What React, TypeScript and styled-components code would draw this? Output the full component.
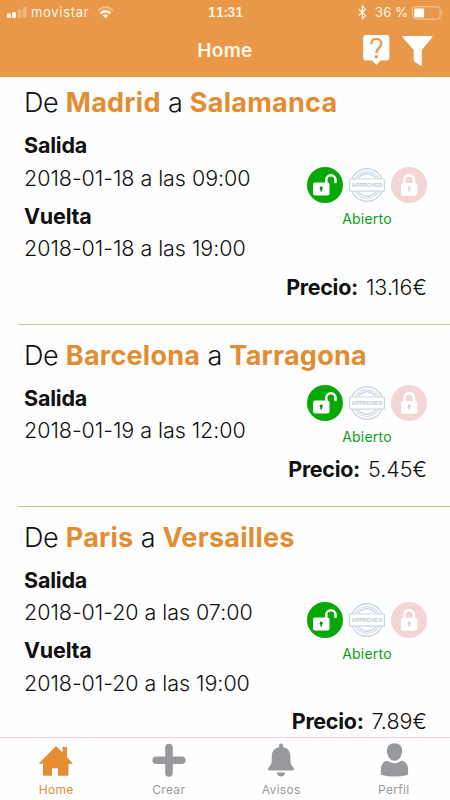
import React from "react";
import styled, { createGlobalStyle } from "styled-components";

const GlobalStyle = createGlobalStyle`
  * { box-sizing: border-box; }
  body { margin: 0; background: #fff; font-family: Inter, "Liberation Sans", sans-serif; }
`;

const Screen = styled.div`
  width: 450px;
  height: 800px;
  display: flex;
  flex-direction: column;
  overflow: hidden;
  background: #fefefe;
  color: #111;
`;

const TopBar = styled.header`
  flex: none;
  height: 77px;
  background: #e99849;
  color: #fff8e8;
`;

const StatusBar = styled.div`
  display: grid;
  grid-template-columns: 1fr auto 1fr;
  align-items: center;
  height: 25px;
  padding: 0 6px 0 7px;
  font-size: 13px;
  line-height: 25px;
`;

const StatusGroup = styled.div<{ $end?: boolean }>`
  display: flex;
  align-items: center;
  justify-content: ${(p) => (p.$end ? "flex-end" : "flex-start")};
`;

const Carrier = styled.span`
  margin: 0 8px 0 4px;
  letter-spacing: 0.7px;
`;

const Clock = styled.span`
  font-weight: 600;
  font-size: 13px;
  font-variant-numeric: tabular-nums;
  letter-spacing: -0.35px;
`;

const Battery = styled.span`
  margin: 0 4px 0 8px;
  letter-spacing: 0.1px;
`;

const NavBar = styled.div`
  display: grid;
  grid-template-columns: 1fr auto 1fr;
  align-items: center;
  height: 51px;
  padding: 0 17px;
`;

const NavTitle = styled.h1`
  grid-column: 2;
  margin: 0;
  font-size: 19px;
  font-weight: 600;
  letter-spacing: 0.3px;
`;

const NavActions = styled.div`
  display: flex;
  justify-content: flex-end;
  gap: 12px;
  margin-top: -2px;
`;

const TripList = styled.main`
  flex: 1;
  min-height: 0;
  overflow: hidden;
  padding-left: 18px;
`;

const Trip = styled.article<{ $first?: boolean }>`
  margin-top: ${(p) => (p.$first ? "-5px" : "0")};
  padding: 13px 23px 20.5px 6px;
  border-bottom: 1px solid #e3b98c;
`;

const Route = styled.h2`
  margin: 0 0 8px;
  height: 36px;
  line-height: 36px;
  font-size: 27px;
  font-weight: 300;
  letter-spacing: -0.3px;
  white-space: nowrap;
`;

const City = styled.strong`
  color: #e28d31;
  font-weight: 700;
  letter-spacing: 0.25px;
`;

const TripBody = styled.div`
  display: flex;
  align-items: center;
  justify-content: space-between;
`;

const Schedule = styled.dl`
  margin: 0;
  display: flex;
  flex-direction: column;
  gap: 5.5px;
`;

const Label = styled.dt`
  height: 32.5px;
  line-height: 32.5px;
  font-size: 21.5px;
  font-weight: 700;
  letter-spacing: -0.2px;
`;

const Moment = styled.dd`
  margin: 0;
  height: 32.5px;
  line-height: 32.5px;
  font-size: 21.5px;
  font-weight: 350;
  letter-spacing: -0.05px;
  white-space: nowrap;
`;

const Status = styled.div`
  display: flex;
  flex-direction: column;
  align-items: center;
  gap: 7px;
  padding-top: 2px;
`;

const StatusIcons = styled.div`
  display: flex;
  gap: 6px;
`;

const StatusText = styled.span`
  color: #0a9f14;
  font-size: 14px;
  line-height: 18px;
  letter-spacing: 0.2px;
`;

const Price = styled.div`
  margin-top: 6px;
  height: 32.5px;
  line-height: 32.5px;
  display: flex;
  justify-content: flex-end;
  gap: 8px;
  font-size: 21.5px;
  font-weight: 350;
  letter-spacing: 0;
`;

const PriceLabel = styled.b`
  font-weight: 700;
  letter-spacing: -0.3px;
`;

const TabBar = styled.nav`
  flex: none;
  height: 63px;
  display: grid;
  grid-template-columns: repeat(4, 1fr);
  border-top: 1px solid #eed3d3;
`;

const Tab = styled.a<{ $active?: boolean }>`
  display: flex;
  flex-direction: column;
  align-items: center;
  padding-top: 4px;
  color: ${(p) => (p.$active ? "#e58d33" : "#98999d")};
  font-size: 12px;
  line-height: 16px;
  letter-spacing: 0.3px;
  gap: 4px;
`;

const SignalIcon = () => (
  <svg width="20" height="13" viewBox="0 0 20 13" fill="currentColor">
    <rect x="0" y="7.5" width="4" height="4.5" rx="1" />
    <rect x="5" y="6" width="4" height="6" rx="1" />
    <rect x="10.5" y="3.5" width="4" height="8.5" rx="1" opacity=".3" />
    <rect x="15.5" y="1" width="4" height="11" rx="1" opacity=".3" />
  </svg>
);

const WifiIcon = () => (
  <svg width="17" height="13" viewBox="0 0 17 13" fill="none" stroke="currentColor" strokeWidth="2">
    <path d="M1 4.4Q8.500-1.800 16 4.400" opacity=".4" />
    <path d="M3.500 7.300Q8.500 3.100 13.500 7.300" strokeWidth="2.300" />
    <path d="M5.600 9.600Q8.500 7.100 11.400 9.600L8.500 12.300Z" fill="currentColor" stroke="none" />
  </svg>
);

const BluetoothIcon = () => (
  <svg width="9" height="15" viewBox="0 0 9 15" fill="none" stroke="currentColor" strokeWidth="1.2">
    <path d="M.8 4.2 7.6 10.4 4.4 13.5V1.2L7.6 4.3.8 10.5" />
  </svg>
);

const BatteryIcon = () => (
  <svg width="32" height="14" viewBox="0 0 32 14">
    <rect x=".6" y=".8" width="27.5" height="12.4" rx="2.5" fill="none" stroke="#f7c99b" />
    <rect x="2.3" y="2.5" width="9.8" height="9" rx="1" fill="#fff" />
    <path d="M29.5 4.8q2 2.2 0 4.4z" fill="#f7c99b" />
  </svg>
);

const HelpIcon = () => (
  <svg width="27" height="32" viewBox="0 0 27 32">
    <path fill="#fff" d="M3 1h20.500a2.800 2.800 0 0 1 2.800 2.800v20a2.800 2.800 0 0 1-2.800 2.800h-6L13.300 31 9.200 26.600H3A2.800 2.800 0 0 1 .2 23.800v-20A2.800 2.800 0 0 1 3 1z" />
    <path d="M8.300 10.200C8.300 6.700 10.400 4.900 13.300 4.900S18.300 6.700 18.300 9.500C18.300 13.500 13.400 13.800 13.400 19.200" fill="none" stroke="#e99849" strokeWidth="2.400" />
    <rect x="11.900" y="21.300" width="3" height="3" fill="#e99849" />
  </svg>
);

const FilterIcon = () => (
  <svg width="31" height="32" viewBox="0 0 31 32">
    <path fill="#fff" d="M1.200 2h28.500q1.200 0 .6 1.200L19.800 16v15q0 1.200-1.300.7l-6-4.300q-.8-.6-.8-1.700V16L.6 3.200Q0 2 1.200 2z" />
  </svg>
);

const OpenLockIcon = () => (
  <svg width="36" height="36" viewBox="0 0 36 36">
    <circle cx="18" cy="18" r="18" fill="#06a806" />
    <rect x="6" y="15.500" width="16.500" height="13" rx="2" fill="#fff" />
    <path d="M19.300 16v-3.200a4.600 4.600 0 0 1 9.200 0V15" fill="none" stroke="#fff" strokeWidth="2.600" strokeLinecap="round" />
    <path d="M14.200 19.600a1.500 1.500 0 0 1 .8 2.800v2.200h-1.600v-2.200a1.500 1.500 0 0 1 .8-2.800z" fill="#078c0c" />
  </svg>
);

const ClosedLockIcon = () => (
  <svg width="36" height="36" viewBox="0 0 36 36">
    <circle cx="18" cy="18" r="18" fill="#f4d5d7" />
    <rect x="10" y="16" width="16.500" height="12.700" rx="2" fill="#fff" />
    <path d="M13.500 16.500v-3.700a4.700 4.700 0 0 1 9.400 0v3.700" fill="none" stroke="#fff" strokeWidth="2.600" />
    <path d="M18.200 19.600a1.500 1.500 0 0 1 .8 2.800v2.200h-1.600v-2.200a1.500 1.500 0 0 1 .8-2.800z" fill="#eccbcf" />
  </svg>
);

const ApprovedIcon = () => (
  <svg width="36" height="36" viewBox="0 0 36 36" fill="none" stroke="#ccd7e5">
    <circle cx="18" cy="18" r="16.200" strokeWidth="1.400" />
    <circle cx="18" cy="18" r="13.300" strokeWidth="1.100" />
    <path d="M9 11q9-8.500 18 0M9 25q9 8.500 18 0" strokeWidth="1.200" />
    <rect x=".6" y="12" width="34.800" height="12.200" rx="1" fill="#fff" strokeWidth="1.200" />
    <text x="2.500" y="20.300" textLength="31" lengthAdjust="spacingAndGlyphs" fontSize="6" fontWeight="700" fontFamily="Liberation Sans, sans-serif" fill="#b9c9de" stroke="none">
      APPROVED
    </text>
  </svg>
);

const HomeIcon = () => (
  <svg width="36" height="36" viewBox="0 0 36 36" fill="currentColor">
    <path d="M18 4 1.300 21q-.5.700.4.700H5v11q0 1 1 1h8v-7.500h6v7.500h9.500q1 0 1-1v-11H34q1 0 .4-.7L29 15.200V5h-4.500v5.600z" />
  </svg>
);

const PlusIcon = () => (
  <svg width="36" height="36" viewBox="0 0 36 36" stroke="currentColor" strokeWidth="7.600" strokeLinecap="round">
    <path d="M18 5.500v25.500M5.200 18.200h25.600" />
  </svg>
);

const BellIcon = () => (
  <svg width="36" height="36" viewBox="0 0 36 36" fill="currentColor">
    <path d="M16.100 5V3.200q0-1.800 2-1.800t2 1.800V5q7.300 1.600 7.300 9.500v5q0 3 3.300 6.500 1.200 2.300-1 2.500H6.300q-2.200-.2-1-2.500 3.400-3.500 3.400-6.500v-5q0-7.900 7.400-9.500zM13.800 30.600h8.400q-.8 4-4.200 4t-4.200-4z" />
  </svg>
);

const PersonIcon = () => (
  <svg width="36" height="36" viewBox="0 0 36 36" fill="currentColor">
    <path d="M18.500 1.300c5 0 7.700 3 7.600 7.700-.2 5-2.800 9.700-7.600 9.700S11.100 14 10.900 9C10.800 4.300 13.500 1.300 18.500 1.300z" />
    <path d="M11.100 18.800q7.400 4.900 14.800 0c3.400.8 6 3.200 6.200 8.200v5q0 .8-.7 1-12.900 3.200-25.800 0-.7-.2-.7-1v-5c.2-5 2.800-7.400 6.200-8.200z" />
  </svg>
);

interface TripData {
  from: string;
  to: string;
  departure: string;
  back?: string;
  price: string;
}

const trips: TripData[] = [
  { from: "Madrid", to: "Salamanca", departure: "2018-01-18 a las 09:00", back: "2018-01-18 a las 19:00", price: "13.16€" },
  { from: "Barcelona", to: "Tarragona", departure: "2018-01-19 a las 12:00", price: "5.45€" },
  { from: "Paris", to: "Versailles", departure: "2018-01-20 a las 07:00", back: "2018-01-20 a las 19:00", price: "7.89€" },
];

const tabs = [
  { name: "Home", icon: <HomeIcon />, active: true },
  { name: "Crear", icon: <PlusIcon />, active: false },
  { name: "Avisos", icon: <BellIcon />, active: false },
  { name: "Perfil", icon: <PersonIcon />, active: false },
];

const TripCard = ({ trip, first }: { trip: TripData; first: boolean }) => (
  <Trip $first={first}>
    <Route>
      De <City>{trip.from}</City> a <City>{trip.to}</City>
    </Route>
    <TripBody>
      <Schedule>
        <div>
          <Label>Salida</Label>
          <Moment>{trip.departure}</Moment>
        </div>
        {trip.back && (
          <div>
            <Label>Vuelta</Label>
            <Moment>{trip.back}</Moment>
          </div>
        )}
      </Schedule>
      <Status>
        <StatusIcons>
          <OpenLockIcon />
          <ApprovedIcon />
          <ClosedLockIcon />
        </StatusIcons>
        <StatusText>Abierto</StatusText>
      </Status>
    </TripBody>
    <Price>
      <PriceLabel>Precio:</PriceLabel>
      <span>{trip.price}</span>
    </Price>
  </Trip>
);

export default function App() {
  return (
    <>
      <GlobalStyle />
      <Screen>
        <TopBar>
          <StatusBar>
            <StatusGroup>
              <SignalIcon />
              <Carrier>movistar</Carrier>
              <WifiIcon />
            </StatusGroup>
            <Clock>11:31</Clock>
            <StatusGroup $end>
              <BluetoothIcon />
              <Battery>36 %</Battery>
              <BatteryIcon />
            </StatusGroup>
          </StatusBar>
          <NavBar>
            <NavTitle>Home</NavTitle>
            <NavActions>
              <HelpIcon />
              <FilterIcon />
            </NavActions>
          </NavBar>
        </TopBar>
        <TripList>
          {trips.map((trip, i) => (
            <TripCard key={trip.from} trip={trip} first={i === 0} />
          ))}
        </TripList>
        <TabBar>
          {tabs.map((tab) => (
            <Tab key={tab.name} $active={tab.active}>
              {tab.icon}
              <span>{tab.name}</span>
            </Tab>
          ))}
        </TabBar>
      </Screen>
    </>
  );
}
